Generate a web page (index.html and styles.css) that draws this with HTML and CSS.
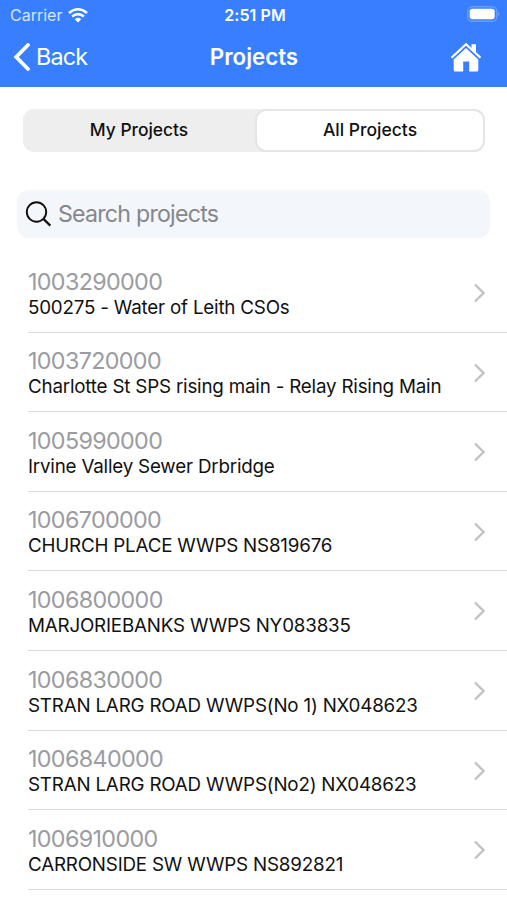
FILE: index.html
```html
<!DOCTYPE html>
<html lang="en"><head><meta charset="utf-8"><title>Projects</title><link rel="stylesheet" href="styles.css"></head>
<body>
<header class="top">
<div class="status"><div class="carrier"><span class="t">Carrier</span><svg class="wifi" viewBox="0 0 20 15"><path d="M1 5Q10-2.4 19 5M4.1 8.5Q10 3.7 15.9 8.5" fill="none" stroke="#fff" stroke-width="2.5"/><path d="M6.8 11.2Q10 8.4 13.2 11.2L10 14.5Z" fill="#fff"/></svg></div><span class="time t">2:51 PM</span><svg class="battery" viewBox="0 0 33 16"><rect x=".75" y=".75" width="29" height="14.5" rx="4.5" fill="none" stroke="#669dff" stroke-width="1.5"/><rect x="2.7" y="2.7" width="25" height="10.6" rx="2.7" fill="#fff"/><path d="M31.3 6Q33.3 8 31.3 10Z" fill="#8db6ff"/></svg></div>
<nav class="nav"><a class="back"><svg class="chev" viewBox="0 0 17 28"><path d="M15 2L3.2 14L15 26" fill="none" stroke="#fff" stroke-width="3.8" stroke-linecap="round"/></svg><span class="t">Back</span></a><h1><span class="t">Projects</span></h1><svg class="home" viewBox="0 0 32 30"><path d="M1.5 15.8L16 2.2L30.5 15.8" fill="none" stroke="#fff" stroke-width="2.2"/><path d="M21.5 2.3H26V11L21.5 6.8Z" fill="#fff"/><path d="M3.7 17.4L16 5.9L28.3 17.4V28Q28.3 29.5 26.8 29.5H19.2V19.5H13.2V29.5H5.2Q3.7 29.5 3.7 28Z" fill="#fff"/></svg></nav>
</header>
<main>
<div class="segments"><button><span class="t">My Projects</span></button><button class="active"><span class="t">All Projects</span></button></div>
<div class="search"><svg viewBox="0 0 28 28"><circle cx="11.5" cy="12" r="9.7" fill="none" stroke="#111" stroke-width="1.9"/><path d="M18.4 18.9L25.3 25.6" stroke="#111" stroke-width="2.2"/></svg><span class="t">Search projects</span></div>
<ul id="list"></ul>
</main>
<script src="script.js"></script>
</body></html>
```
FILE: styles.css
```css
*{box-sizing:border-box}
body{margin:0;width:507px;height:900px;overflow:hidden;background:#fff;font-family:Inter,sans-serif;color:#111}
.t{white-space:nowrap}
.top{height:87px;background:#387fff;color:#fff}
.status{height:30px;display:grid;grid-template-columns:1fr auto 1fr;align-items:center;padding:0 7px 0 10px;font-size:16px}
.carrier{display:flex;align-items:center;gap:6px;color:#d7e5ff}
.wifi{width:20px;height:15px}
.time{font-weight:600;letter-spacing:.1px}
.battery{width:33px;height:16px;justify-self:end;margin-top:-2px}
.nav{height:57px;display:grid;grid-template-columns:1fr auto 1fr;align-items:center;padding:0 25px 4px 13px}
.back{display:flex;align-items:center;gap:6px;font-size:23.3px;letter-spacing:-.8px}
.back,.home{min-width:0}
.chev{width:17px;height:28px;margin-top:1px}
h1{margin:0 0 0 13px;font-size:22.3px;font-weight:600}
.home{width:32px;height:30px;justify-self:end;margin-top:1px}
.segments{display:flex;margin:22px 22px 0 23px;height:43px;border-radius:11px;background:#eee}
button{border:0;background:none;font:500 17.4px Inter,sans-serif;color:#111;padding:0 0 2px;flex:0 0 232px}
.active{flex:1;background:#fff;border:2.5px solid #e5e5e5;border-radius:11px;font-size:17.5px;line-height:33px}
.search{margin:38px 17px 0;height:48px;border-radius:12px;background:#f3f6fa;display:flex;align-items:center;gap:5px;padding-left:8px;font-size:23.2px;letter-spacing:-.78px;color:#85878b}
.search svg{width:28px;height:28px}
ul{list-style:none;margin:15.3px 0 0 28px;padding:0}
li{height:79.55px;border-bottom:1px solid #dadadc;display:flex;align-items:center;justify-content:space-between;padding:1.4px 21px 0 0}
.row{display:flex;flex-direction:column;padding-top:1px}
.code{font-size:23.3px;line-height:27px;letter-spacing:-.65px;color:#9b9ca1}
.name{font-size:18.8px;line-height:25px;letter-spacing:-.2px}
.arrow{width:13px;height:20px}
```
FILE: script.js
```js
const projects=[["1003290000","500275 - Water of Leith CSOs"],["1003720000","Charlotte St SPS rising main - Relay Rising Main"],["1005990000","Irvine Valley Sewer Drbridge"],["1006700000","CHURCH PLACE WWPS NS819676"],["1006800000","MARJORIEBANKS WWPS NY083835"],["1006830000","STRAN LARG ROAD WWPS(No 1) NX048623"],["1006840000","STRAN LARG ROAD WWPS(No2) NX048623"],["1006910000","CARRONSIDE SW WWPS NS892821"]];
document.getElementById("list").innerHTML=projects.map(([code,name])=>`<li><div class="row"><span class="code">${code}</span><span class="name">${name}</span></div><svg class="arrow" viewBox="0 0 13 20"><path d="M2 1.5L10.5 10L2 18.5" fill="none" stroke="#c2c2c5" stroke-width="2.4"/></svg></li>`).join("");
```
